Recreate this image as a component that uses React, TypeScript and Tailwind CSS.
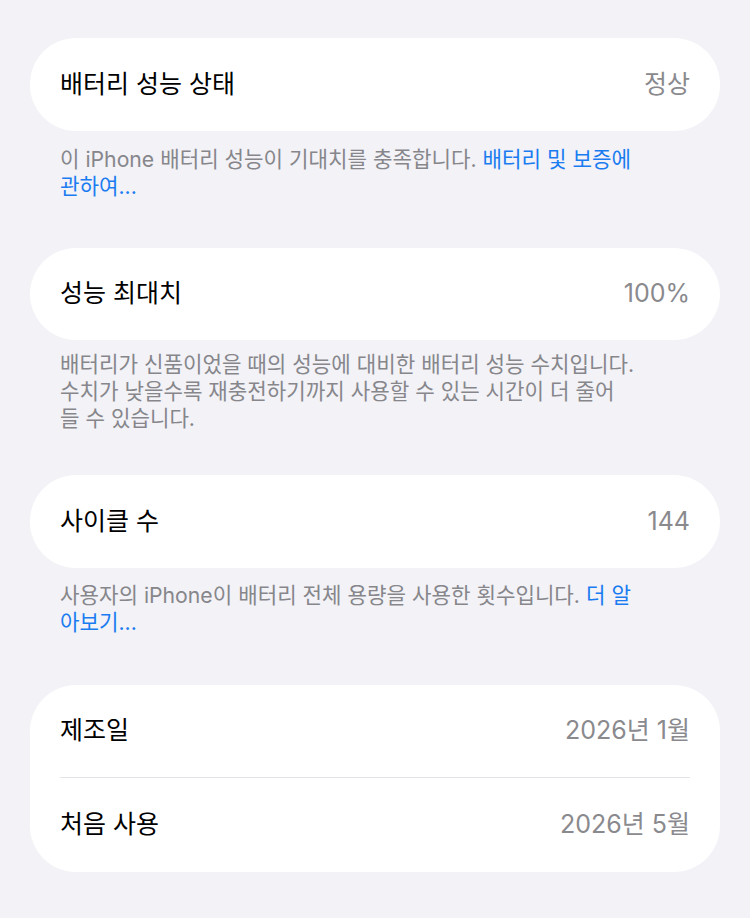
import React from 'react';

const font = { fontFamily: 'Inter, "Noto Sans CJK KR", "Noto Sans", sans-serif' };

const Row: React.FC<{ label: string; value: string; className?: string }> = ({ label, value, className }) => (
  <div className={`flex items-center justify-between px-[30px] ${className ?? 'h-[93px]'}`}>
    <span className="text-[25px] text-black">{label}</span>
    <span className="text-[25px] text-[#8a8a8e]">{value}</span>
  </div>
);

const Footer: React.FC<{ lines: React.ReactNode[]; className?: string }> = ({ lines, className }) => (
  <div className={`px-[60px] text-[21.2px] leading-[27px] text-[#86868b] ${className ?? ''}`}>
    {lines.map((l, i) => (
      <div key={i} className="whitespace-nowrap">
        {l}
      </div>
    ))}
  </div>
);

const Link: React.FC<{ children: React.ReactNode }> = ({ children }) => (
  <span className="text-[#1a7cf0]">{children}</span>
);

const App: React.FC = () => {
  return (
    <div className="min-h-[918px] w-[750px] bg-[#f2f2f7] pt-[38px]" style={font}>
      <div className="mx-[30px] rounded-[46px] bg-white">
        <Row label="배터리 성능 상태" value="정상" />
      </div>
      <Footer
        className="mt-[15px]"
        lines={[
          <>
            이 iPhone 배터리 성능이 기대치를 충족합니다. <Link>배터리 및 보증에</Link>
          </>,
          <Link>관하여...</Link>,
        ]}
      />

      <div className="mx-[30px] mt-[48px] rounded-[46px] bg-white">
        <Row label="성능 최대치" value="100%" className="h-[92px]" />
      </div>
      <Footer
        className="mt-[11px]"
        lines={[
          '배터리가 신품이었을 때의 성능에 대비한 배터리 성능 수치입니다.',
          '수치가 낮을수록 재충전하기까지 사용할 수 있는 시간이 더 줄어',
          '들 수 있습니다.',
        ]}
      />

      <div className="mx-[30px] mt-[43px] rounded-[46px] bg-white">
        <Row label="사이클 수" value="144" />
      </div>
      <Footer
        className="mt-[14px]"
        lines={[
          <>
            사용자의 iPhone이 배터리 전체 용량을 사용한 횟수입니다. <Link>더 알</Link>
          </>,
          <Link>아보기...</Link>,
        ]}
      />

      <div className="mx-[30px] mt-[49px] rounded-[46px] bg-white">
        <Row label="제조일" value="2026년 1월" className="h-[92px]" />
        <div className="mx-[30px] h-px bg-[#e3e3e8]" />
        <Row label="처음 사용" value="2026년 5월" className="h-[94px]" />
      </div>
    </div>
  );
};

export default App;
